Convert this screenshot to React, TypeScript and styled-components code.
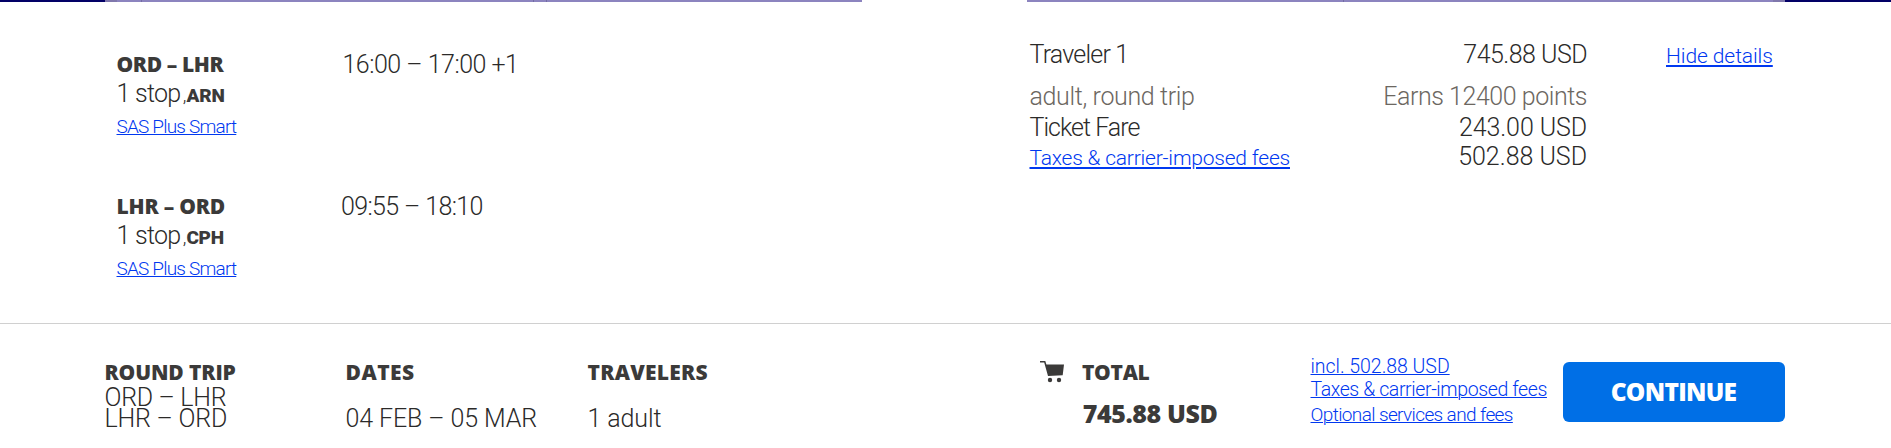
import React from 'react';
import styled, { createGlobalStyle } from 'styled-components';

const Global = createGlobalStyle`
  body { margin: 0; background: #fff; }
  * { box-sizing: border-box; }
`;

const ink = '#3b3a39';
const body = '#2b2a29';
const muted = '#6c6761';
const link = '#0038f0';

const Page = styled.div`
  width: 1891px;
  height: 448px;
  overflow: hidden;
  color: ${ink};
  font-family: Roboto, "Noto Sans", sans-serif;
`;

const Strip = styled.div`
  display: flex;
  height: 2px;
`;

const StripPart = styled.div<{ w: number; c: string }>`
  flex: 0 0 ${p => p.w}px;
  background: ${p => p.c};
`;

interface TypeProps {
  size?: number;
  ls?: number;
  tone?: string;
  drop?: number;
}

const Text = styled.span<TypeProps>`
  padding-top: ${p => p.drop ?? 1}px;
  font-size: ${p => p.size ?? 25}px;
  font-weight: 300;
  letter-spacing: ${p => p.ls ?? 0}px;
  color: ${p => p.tone ?? body};
  white-space: nowrap;
`;

const Bold = styled.span<TypeProps>`
  font-family: "Open Sans", "Noto Sans", sans-serif;
  font-size: ${p => p.size ?? 21}px;
  font-weight: 800;
  letter-spacing: ${p => p.ls ?? 0}px;
  white-space: nowrap;
`;

const Code = styled.span<TypeProps>`
  font-size: 19px;
  font-weight: 900;
  letter-spacing: ${p => p.ls ?? 0}px;
`;

const Link = styled.a<TypeProps & { thick?: number }>`
  padding-top: ${p => p.drop ?? 1}px;
  font-size: ${p => p.size ?? 19.5}px;
  font-weight: 300;
  letter-spacing: ${p => p.ls ?? 0}px;
  color: ${link};
  white-space: nowrap;
  text-decoration: underline;
  text-decoration-thickness: ${p => p.thick ?? 1}px;
  text-underline-offset: ${p => p.thick ?? 1}px;
`;

const Line = styled.div<{ h: number; mt?: number; ml?: number }>`
  display: flex;
  align-items: baseline;
  height: ${p => p.h}px;
  line-height: ${p => p.h}px;
  margin-top: ${p => p.mt ?? 0}px;
  margin-left: ${p => p.ml ?? 0}px;
`;

const Details = styled.section`
  display: flex;
  height: 321px;
  padding: 36px 0 0 116.5px;
`;

const Segments = styled.div`
  display: flex;
  flex-direction: column;
  gap: 48px;
  width: 913px;
  padding-top: 12px;
`;

const Segment = styled.div`
  display: grid;
  grid-template-columns: 224px auto;
  justify-content: start;
`;

const Route = styled.div``;

const Airport = styled.span`
  display: flex;
  align-items: baseline;
  margin-left: 2.5px;
`;

const Fare = styled.div`
  width: 557.5px;
`;

const FareRow = styled(Line)`
  justify-content: space-between;
`;

const HideCell = styled.div`
  margin-left: 79px;
`;

const Footer = styled.footer`
  display: flex;
  height: 125px;
  padding: 34px 0 0 104.5px;
  border-top: 1px solid #d0d0d0;
`;

const Column = styled.div<{ w: number }>`
  flex: 0 0 ${p => p.w}px;
`;

const Cart = styled.svg`
  flex: 0 0 25px;
  margin: 3px 17px 0 0;
`;

const Links = styled.div`
  flex: 0 0 252.5px;
  min-width: 0;
  margin-top: -4px;
`;

const Continue = styled.button`
  flex: 0 0 222px;
  height: 60px;
  margin-top: 4px;
  padding: 0 1px 0 0;
  border: 0;
  border-radius: 6px;
  background: #006fe6;
  color: #fff;
  line-height: 60px;
`;

const strip: [number, string][] = [
  [105, '#020066'], [12, '#8078ac'], [24, '#8c84bf'], [1, '#736ca4'], [391, '#8c84bf'],
  [1, '#736ca4'], [12, '#8c84bf'], [1, '#736ca4'], [315, '#8c84bf'], [165, '#fff'],
  [316, '#8c84bf'], [1, '#736ca4'], [429, '#8c84bf'], [12, '#8078ac'], [106, '#020066'],
];

export default function App() {
  return (
    <Page>
      <Global />
      <Strip>
        {strip.map(([w, c], i) => <StripPart key={i} w={w} c={c} />)}
      </Strip>
      <Details>
        <Segments>
          <Segment>
            <Route>
              <Line h={28}><Bold ls={-0.38}>ORD – LHR</Bold></Line>
              <Line h={29}>
                <Text ls={-0.75}>1 stop</Text>
                <Airport><Text size={19}>,</Text><Code ls={-0.17}>ARN</Code></Airport>
              </Line>
              <Line h={37}><Link size={19} ls={-0.8}>SAS Plus Smart</Link></Line>
            </Route>
            <Line h={28} ml={2}><Text ls={-0.5}>16:00 – 17:00 +1</Text></Line>
          </Segment>
          <Segment>
            <Route>
              <Line h={28}><Bold ls={-0.21}>LHR – ORD</Bold></Line>
              <Line h={29}>
                <Text ls={-0.75}>1 stop</Text>
                <Airport><Text size={19}>,</Text><Code ls={-0.32}>CPH</Code></Airport>
              </Line>
              <Line h={37}><Link size={19} ls={-0.8}>SAS Plus Smart</Link></Line>
            </Route>
            <Line h={28} ml={0.5}><Text ls={-0.62}>09:55 – 18:10</Text></Line>
          </Segment>
        </Segments>
        <Fare>
          <FareRow h={30}><Text drop={2} ls={-0.8}>Traveler 1</Text><Text drop={2} ls={-0.54}>745.88 USD</Text></FareRow>
          <FareRow h={30} mt={12}>
            <Text drop={2} ls={-0.36} tone={muted}>adult, round trip</Text>
            <Text drop={2} ls={-0.46} tone={muted}>Earns 12400 points</Text>
          </FareRow>
          <FareRow h={30} mt={1}><Text drop={2} ls={-0.98}>Ticket Fare</Text><Text drop={2} ls={-0.1}>243.00 USD</Text></FareRow>
          <FareRow h={30}>
            <Link size={21} thick={2} drop={2} ls={-0.21}>Taxes &amp; carrier-imposed fees</Link>
            <Text ls={-0.02}>502.88 USD</Text>
          </FareRow>
        </Fare>
        <HideCell>
          <Line h={32}><Link size={21} thick={2} drop={2} ls={-0.09}>Hide details</Link></Line>
        </HideCell>
      </Details>
      <Footer>
        <Column w={241}>
          <Line h={28}><Bold ls={-0.12}>ROUND TRIP</Bold></Line>
          <Line h={21}><Text ls={-0.3}>ORD – LHR</Text></Line>
          <Line h={21}><Text ls={-0.2}>LHR – ORD</Text></Line>
        </Column>
        <Column w={242}>
          <Line h={28}><Bold ls={0.5}>DATES</Bold></Line>
          <Line h={21} mt={21}><Text ls={-0.1}>04 FEB – 05 MAR</Text></Line>
        </Column>
        <Column w={452.5}>
          <Line h={28}><Bold ls={0.26}>TRAVELERS</Bold></Line>
          <Line h={21} mt={21}><Text ls={-0.1}>1 adult</Text></Line>
        </Column>
        <Cart width="25" height="22" viewBox="0 0 25 22" fill={ink}>
          <path d="M0 0H5.3L6.4 3.5H24L22.7 14.2L8 15L4.2 1.5H0Z" />
          <circle cx="10" cy="19" r="2.2" />
          <circle cx="19" cy="19" r="2.2" />
        </Cart>
        <Column w={228.5}>
          <Line h={28}><Bold ls={-0.3}>TOTAL</Bold></Line>
          <Line h={21} mt={17} ml={0.7}><Bold size={25} ls={-0.39}>745.88 USD</Bold></Line>
        </Column>
        <Links>
          <Line h={23}><Link ls={-0.03}>incl. 502.88 USD</Link></Line>
          <Line h={23}><Link ls={-0.39}>Taxes &amp; carrier-imposed fees</Link></Line>
          <Line h={23} mt={2}><Link size={19} ls={-0.62}>Optional services and fees</Link></Line>
        </Links>
        <Continue type="button"><Bold size={24.5} ls={-0.7}>CONTINUE</Bold></Continue>
      </Footer>
    </Page>
  );
}
